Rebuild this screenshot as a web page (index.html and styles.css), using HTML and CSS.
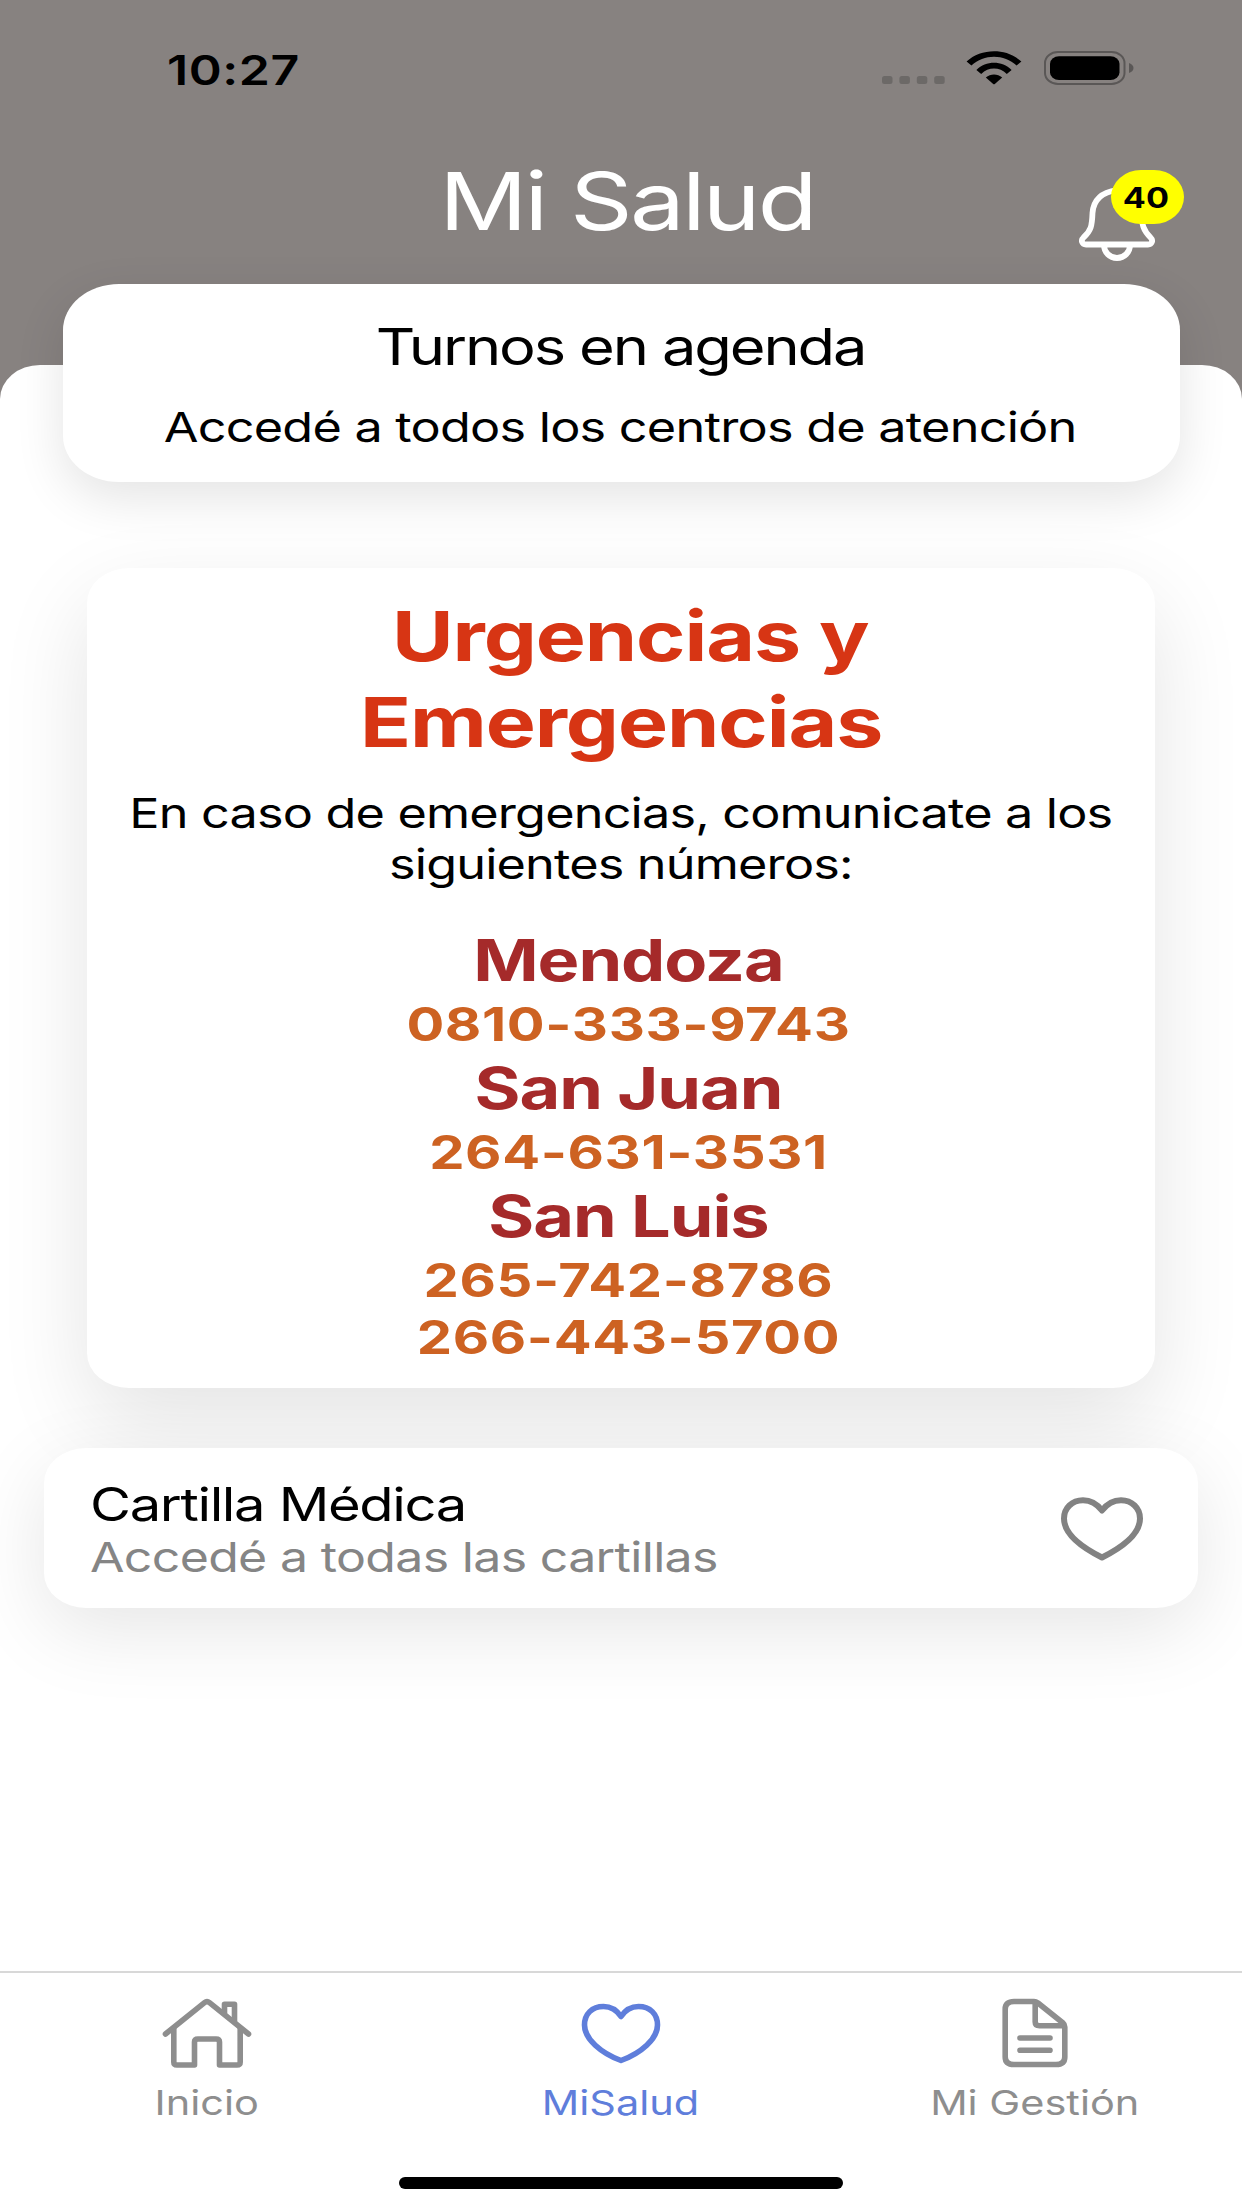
FILE: index.html
```html
<!DOCTYPE html>
<html lang="es">
<head>
  <meta charset="UTF-8">
  <title>Mi Salud</title>
  <link rel="stylesheet" href="styles.css">
</head>
<body>
  <div class="status-bar">
    <span class="time">10:27</span>
    <div class="status-icons">
      <svg class="signal" width="63" height="8" viewBox="0 0 63 8" fill="#6c6967">
        <rect x="0" width="10.5" height="8" rx="2.5"/>
        <rect x="17.4" width="10.5" height="8" rx="2.5"/>
        <rect x="34.8" width="10.5" height="8" rx="2.5"/>
        <rect x="52.2" width="10.5" height="8" rx="2.5"/>
      </svg>
      <svg class="wifi" width="56" height="34" viewBox="0 0 56 34">
        <path d="M0.6 10.6 C15 -3.2 41 -3.2 55.4 10.6 L50.6 14.6 C38 2.8 18 2.8 5.4 14.6 Z"/>
        <path d="M10.4 19 C20 9.4 36 9.4 45.6 19 L40.8 23 C33.5 15.8 22.5 15.8 15.2 23 Z"/>
        <path d="M19.8 26.6 C24.5 22.6 31.5 22.6 36.2 26.6 L28.8 32.9 Q28 33.5 27.2 32.9 Z"/>
      </svg>
      <svg class="battery" width="90" height="34" viewBox="0 0 90 34">
        <rect x="1" y="1" width="79.5" height="32" rx="13" ry="11" fill="none" stroke="#5a5756" stroke-width="2"/>
        <rect x="6" y="5.3" width="69.5" height="23.6" rx="9" ry="7.5"/>
        <path d="M85 12 C91 14 91 20 85 22 Z" fill="#5a5756"/>
      </svg>
    </div>
  </div>

  <header class="title-bar">
    <h1 class="wide">Mi Salud</h1>
    <div class="bell">
      <svg width="76" height="78" viewBox="0 0 76 78" fill="none" stroke="#fff" stroke-width="5.8" stroke-linejoin="round">
        <path d="M38 6 C24 8 14.5 15 13.5 29 C13 42 12 47 4.5 53.5 C1.5 56.5 3 60.5 7 60.5 H69 C73 60.5 74.5 56.5 71.5 53.5 C64 46 63 41 62.5 29 C61 15 52 8 38 6 Z"/>
        <path d="M25 61 C25 68 30.5 74 38 74 C45.500 74 51 68 51 61"/>
      </svg>
      <span class="badge"><span class="wide">40</span></span>
    </div>
  </header>

  <main class="sheet">
    <section class="card turnos">
      <h2 class="wide">Turnos en agenda</h2>
      <p class="wide">Accedé a todos los centros de atención</p>
    </section>

    <section class="card urgencias">
      <h2 class="wide"><span class="shift">Urgencias y</span><br>Emergencias</h2>
      <p class="wide">En caso de emergencias, comunicate a los<br>siguientes números:</p>
      <div class="telefonos wide">
        <h3>Mendoza</h3>
        <a>0810-333-9743</a>
        <h3>San Juan</h3>
        <a>264-631-3531</a>
        <h3>San Luis</h3>
        <a>265-742-8786</a>
        <a>266-443-5700</a>
      </div>
    </section>

    <section class="card cartilla">
      <div class="cartilla-texto">
        <h2>Cartilla Médica</h2>
        <p>Accedé a todas las cartillas</p>
      </div>
      <svg width="82" height="64" viewBox="0 0 82 64" fill="none" stroke="#828282" stroke-width="6" stroke-linejoin="round">
        <path d="M41 13.500 C36 7 30 3.300 22 3.300 C11 3.300 3 11 3 21.500 C3 37 19 49.500 41 60.500 C63 49.500 79 37 79 21.500 C79 11 71 3.300 60 3.300 C52 3.300 46 7 41 13.500 Z"/>
      </svg>
    </section>
  </main>

  <nav class="tab-bar">
    <a class="tab">
      <svg width="90" height="74" viewBox="0 0 90 74" fill="none" stroke="#8e8e8e" stroke-width="5.6" stroke-linecap="round" stroke-linejoin="round">
        <path d="M3.500 38 L42.500 6.600 Q45 4.600 47.500 6.600 L86.500 38"/>
        <path d="M11.800 33 V66 Q11.800 69 15 69 H32.500 V46 Q32.500 43 36 43 H54 Q57.500 43 57.500 46 V69 H75 Q78.200 69 78.200 66 V33"/>
        <path d="M62.500 17 V8.300 H72.500 V25"/>
      </svg>
      <span class="wide">Inicio</span>
    </a>
    <a class="tab active">
      <svg width="80" height="74" viewBox="0 0 80 74" fill="none" stroke="#5f7edb" stroke-width="5.6" stroke-linejoin="round">
        <path d="M40 20.500 C36 14.500 31 10.500 22.500 10.500 C11 10.500 3.500 18 3.500 29 C3.500 43 20 57 40 64.500 C60 57 76.500 43 76.500 29 C76.500 18 69 10.500 57.500 10.500 C49 10.500 44 14.500 40 20.500 Z"/>
      </svg>
      <span class="wide">MiSalud</span>
    </a>
    <a class="tab">
      <svg width="66" height="74" viewBox="0 0 66 74" fill="none" stroke="#8e8e8e" stroke-width="5.6" stroke-linecap="round" stroke-linejoin="round">
        <path d="M12 5.500 H32 Q34 5.500 36 7 L61 27 Q62.800 28.500 62.800 31 V61 Q62.800 68.500 54 68.500 H12 Q3.200 68.500 3.200 61 V13 Q3.200 5.500 12 5.500 Z"/>
        <path d="M33.200 6.500 V26 Q33.200 29.700 37.500 29.700 H61.500"/>
        <path d="M18 42 H48 M18 54.200 H48"/>
      </svg>
      <span class="wide">Mi Gestión</span>
    </a>
  </nav>
  <div class="home-indicator"></div>
</body>
</html>
```
FILE: styles.css
```css
* { box-sizing: border-box; }
body { margin: 0; height: 2208px; overflow: hidden; display: flex; flex-direction: column; background: #878280; color: #000; font-family: Inter, "Liberation Sans", sans-serif; }
h1, h2, h3, p { margin: 0; font-weight: 400; white-space: nowrap; }
svg { display: block; }

/* all the lettering is wider than the font draws it */
.wide { width: max-content; margin-left: auto; margin-right: auto; transform: scaleX(1.22); }

.status-bar { height: 136px; padding: 0 108px 0 167px; display: flex; justify-content: space-between; align-items: center; }
.time { font-size: 41px; font-weight: 600; letter-spacing: 0.45px; padding-top: 3px; transform: scaleX(1.22); transform-origin: left; }
.status-icons { display: flex; align-items: center; }
.signal { margin: 24px 21px 0 0; }
.wifi { margin-right: 22px; }

.title-bar { height: 229px; padding-top: 1px; position: relative; text-align: center; }
h1 { font-size: 80px; line-height: 128px; letter-spacing: -2.3px; padding-left: 10px; color: #fff; }
.bell { position: absolute; top: 48px; right: 87px; }
.badge { position: absolute; top: -14px; left: 32px; width: 73px; height: 54px; border-radius: 30px / 27px; background: #ffff00; display: flex; justify-content: center; align-items: center; padding: 2px 3px 0 0; font-size: 28px; font-weight: 700; }
.badge .wide { margin: 0; }

.sheet { height: 1606px; background: #fff; border-radius: 40px 40px 0 0 / 34px 34px 0 0; }
.card { background: #fff; }

.turnos { height: 198px; margin: -81px 62px 0 63px; padding-top: 32px; padding-right: 2px; border-radius: 56px / 46px; text-align: center; position: relative; box-shadow: 0 16px 50px rgba(0, 0, 0, 0.11); }
.turnos h2 { font-size: 50.3px; line-height: 61px; letter-spacing: -1.75px; }
.turnos p { margin-top: 25px; font-size: 41.3px; line-height: 50px; letter-spacing: -0.63px; }

.urgencias { height: 820px; margin: 86px 87px 0; padding-top: 26px; border-radius: 42px / 35px; text-align: center; position: relative; box-shadow: 0 34px 90px rgba(0, 0, 0, 0.11); }
.urgencias h2 { font-size: 69px; font-weight: 700; line-height: 85.7px; letter-spacing: -0.9px; color: #d73514; }
.shift { padding-left: 15px; }
.urgencias p { margin-top: 23px; font-size: 41.3px; line-height: 50.3px; letter-spacing: -0.68px; }
.telefonos { margin-top: 36px; padding-left: 13px; }
.telefonos h3 { font-size: 57.6px; font-weight: 700; line-height: 71px; letter-spacing: -0.9px; color: #a52a2a; }
.telefonos a { display: block; font-size: 46px; font-weight: 700; line-height: 57px; letter-spacing: 0.5px; color: #cd6222; }

.cartilla { height: 160px; margin: 60px 44px 0; padding: 1px 55px 0 46px; border-radius: 42px / 35px; display: flex; justify-content: space-between; align-items: center; position: relative; box-shadow: 0 22px 80px rgba(0, 0, 0, 0.1); }
.cartilla-texto { transform: scaleX(1.22); transform-origin: left; }
.cartilla-texto h2 { font-size: 46px; line-height: 56px; letter-spacing: -1.12px; }
.cartilla-texto p { font-size: 41px; line-height: 50px; letter-spacing: -0.55px; color: #858585; }

.tab-bar { height: 206px; padding-top: 23px; border-top: 2px solid #d8d8d8; background: #fff; display: grid; grid-template-columns: repeat(3, 1fr); }
.tab { display: flex; flex-direction: column; align-items: center; gap: 12px; font-size: 34px; line-height: 42px; color: #8e8e8e; white-space: nowrap; }
.active { color: #5f7edb; }
.home-indicator { flex: 1; background: #fff; }
.home-indicator::before { content: ""; display: block; width: 444px; height: 12px; margin: 0 auto; border-radius: 6px; background: #000; }
```
